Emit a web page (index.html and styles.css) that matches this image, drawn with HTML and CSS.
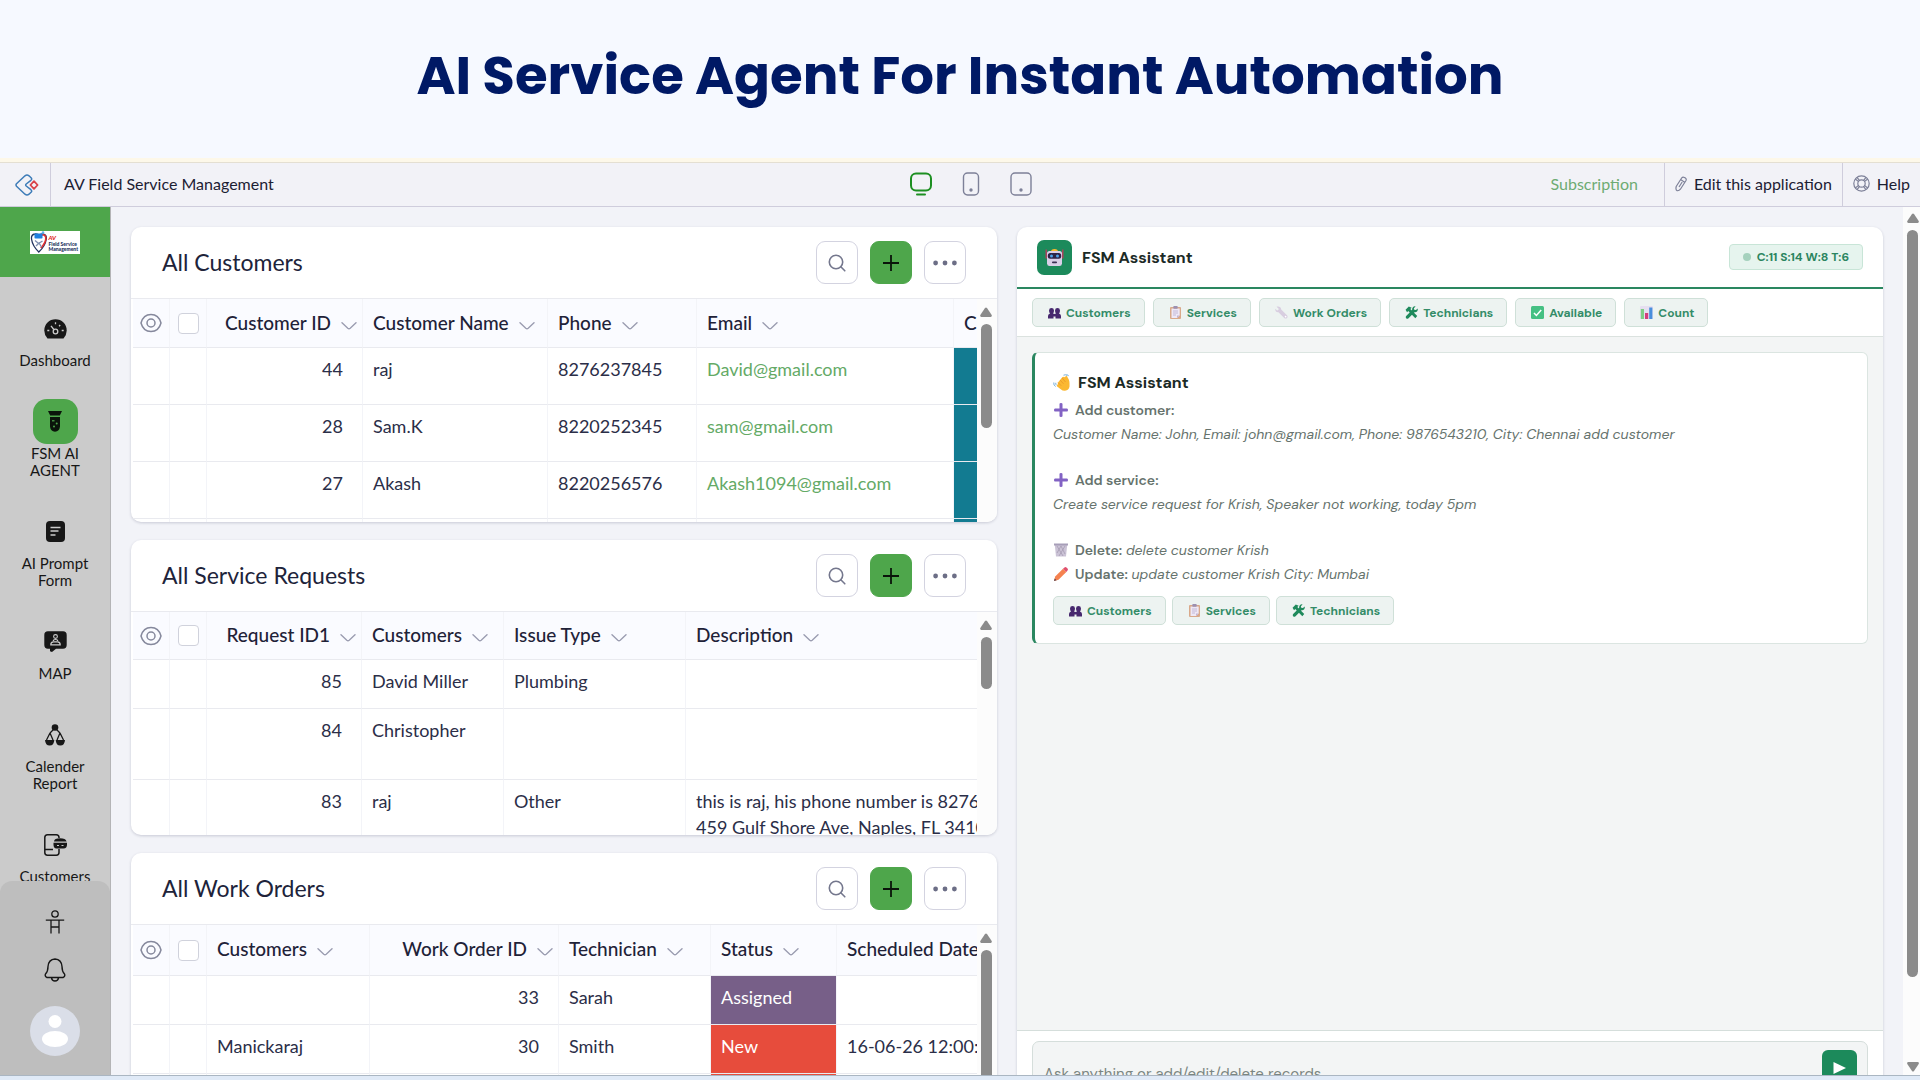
FILE: index.html
```html
<!doctype html>
<html lang="en">
    <head>
        <meta charset="UTF-8">
        <meta name="viewport" content="width=device-width, initial-scale=1.0">
        <title>AV Field Service Management</title>
        <link rel="stylesheet" href="styles.css">
    </head>
    <body>
        <svg class="sprite" aria-hidden="true">
            <symbol id="i-chevron" viewBox="0 0 16 8">
                <path d="M1 .8l5.8 5.4q1.2 1 2.4 0L15 .8" fill="none" stroke="#9a9cb0" stroke-width="1.4" stroke-linecap="round"/>
            </symbol>
            <symbol id="i-eye" viewBox="0 0 22 20">
                <path d="M1 10C2.500 4.500 6.500 1.500 11 1.500S19.500 4.500 21 10c-1.500 5.500-5.500 8.500-10 8.500S2.500 15.500 1 10z" fill="none" stroke="#85889c" stroke-width="1.500"/>
                <circle cx="11" cy="10" r="4" fill="none" stroke="#85889c" stroke-width="1.500"/>
            </symbol>
            <symbol id="i-search" viewBox="0 0 18 18">
                <circle cx="8" cy="8" r="6.700" fill="none" stroke="#74778d" stroke-width="1.600"/>
                <path d="M12.800 12.800l4 4" stroke="#74778d" stroke-width="1.600" stroke-linecap="round"/>
            </symbol>
            <symbol id="i-plus" viewBox="0 0 18 18">
                <path d="M9 1v16M1 9h16" stroke="#0a140a" stroke-width="1.800"/>
            </symbol>
            <symbol id="i-dots" viewBox="0 0 24 6">
                <circle cx="2.600" cy="3" r="2.400" fill="#6c6e86"/>
                <circle cx="12" cy="3" r="2.400" fill="#6c6e86"/>
                <circle cx="21.400" cy="3" r="2.400" fill="#6c6e86"/>
            </symbol>
            <symbol id="i-up" viewBox="0 0 12 10">
                <path d="M5 1q1-1 2 0l4.700 7q.6 1.800-1 2H1.300q-1.600-.2-1-2z" fill="#8b8b8b"/>
            </symbol>
            <symbol id="e-people" viewBox="0 0 13 12">
                <path d="M0 12V9.500q0-2 2-2.600Q1 5.900 1 4 1.100 1.600 3.500 1.600T6 4q0 1.900-1 2.900l1.500.6L8 6.900Q7 5.900 7 4q.1-2.400 2.500-2.400T12 4q0 1.900-1 2.900 2 .6 2 2.600V12H7.500v-2h-2v2z" fill="#47286e"/>
            </symbol>
            <symbol id="e-clip" viewBox="0 0 12 13">
                <rect x=".5" y="1" width="11" height="12" rx="1" fill="#d9a98a"/>
                <path d="M2 2.500h8.200v7L7.500 12H2z" fill="#eee8f6"/>
                <path d="M7.500 12V9.500h2.700z" fill="#c3b4d3"/>
                <rect x="3.800" y="0" width="4.400" height="2.700" rx=".8" fill="#9d90b0"/>
                <path d="M3.500 5h5M3.500 7h5M3.500 9h3" stroke="#b9add0" stroke-width=".8"/>
            </symbol>
            <symbol id="e-wrench" viewBox="0 0 12 12">
                <path d="M1.400.6l2 1.900-.3 1.200-1.200.4L.3 2.600C-.1 4.600 1.200 6 3.200 5.700l5.300 5.400q1.400 1.100 2.600-.1 1.100-1.200 0-2.500L5.700 3.300C5.900 1.400 3.900-.1 1.400.6z" fill="#d8cee0"/>
                <circle cx="9.800" cy="9.700" r=".8" fill="#fff"/>
            </symbol>
            <symbol id="e-tools" viewBox="0 0 12 12">
                <path d="M.5 3.500L3.500.5l2.700 1-1.300 1.300 6.400 6.500-1.800 1.900L3 4.700 1.900 5.800z" fill="#1f8a5c"/>
                <path d="M9.700.4L8.200 2l.3 1.500 1.600.3 1.600-1.500c.5 2-.8 3.700-2.900 3.400L3 11.500q-1 .7-1.900-.2-.8-1 0-2L6.600 3.800C6.300 1.700 7.800 0 9.700.4z" fill="#1f8a5c"/>
            </symbol>
            <symbol id="e-check" viewBox="0 0 13 13">
                <rect width="13" height="13" rx="1.500" fill="#45c083"/>
                <path d="M3 7l2.400 2.500L10.200 4" fill="none" stroke="#fff" stroke-width="1.500"/>
            </symbol>
            <symbol id="e-chart" viewBox="0 0 13 13">
                <rect width="13" height="13" rx="1" fill="#e6dff0"/>
                <rect x=".8" y="3" width="3.200" height="10" fill="#7ecf86"/>
                <rect x="5" y="7" width="3.200" height="6" fill="#d33f7c"/>
                <rect x="9.200" y="1.500" width="3.200" height="11.500" fill="#4a8fdc"/>
            </symbol>
            <symbol id="e-add" viewBox="0 0 14 14">
                <path d="M5.500 1q0-1 1.500-1t1.500 1v4.500H13q1 0 1 1.500t-1 1.500H8.500V13q0 1-1.500 1t-1.500-1V8.500H1Q0 8.500 0 7t1-1.500h4.500z" fill="#8262c4"/>
            </symbol>
            <symbol id="e-wave" viewBox="0 0 17 17">
                <path d="M5.200 8.200L9.500 3q1-.8 1.700.2L13.300 2q1 0 1.200 1.200l1.300 2.300q.7 1.500.7 3.500v3.500q-.6 4-4.500 4.200-2.500.1-4.300-1.500L4.200 12.500q-1-1.200.3-1.800z" fill="#fbb831"/>
                <path d="M5 8.500l3.200 3.200M7 6l3.500 3.800M9.200 4l3.300 4" stroke="#e8962a" stroke-width=".8"/>
                <path d="M10.500 1.200q2-1 3.500.2M13.500.3q1.500.5 2 1.800M.8 8.500q-.6 2.800 1.900 4M2.800 8.800q-.4 1.400.6 2.400" fill="none" stroke="#6aa7d6" stroke-width=".9"/>
            </symbol>
            <symbol id="e-bin" viewBox="0 0 14 14">
                <path d="M.8 2h12.400L12 13.500H2z" fill="#cbc3d6"/>
                <path d="M0 .5h14v2H0z" fill="#a79eb8"/>
                <path d="M3 3l6 10M7 3l4 8M11 3L5 13M7 3l-4 7" stroke="#a096ae" stroke-width=".7"/>
            </symbol>
            <symbol id="e-pencil" viewBox="0 0 14 14">
                <path d="M0 14l1.200-4.500L9 1.700l3.300 3.300-7.800 7.800z" fill="#f5824f"/>
                <path d="M9 1.700L10.500.4q1-.8 2 .2l1 1q.9 1 0 2L12.300 5z" fill="#e0506f"/>
                <path d="M0 14l.7-2.600 1.900 1.900z" fill="#5a4450"/>
            </symbol>
        </svg>

        <header class="hero">
            <h1>AI Service Agent For Instant Automation</h1>
        </header>

        <div class="app">
            <div class="topbar">
                <a class="topbar-logo" href="#" aria-label="Home">
                    <svg width="24" height="22" viewBox="0 0 24 22" fill="none" stroke-width="1.5" stroke-linejoin="round">
                        <path d="M1.500 9.800L10 1.800q2-1.600 4 0l2.300 2.200q.9 1.200-.4 2.300L11.200 10q-1 1 0 2l4.700 3.700q1.300 1.100.4 2.300L14 20.200q-2 1.600-4 0L1.500 12.200q-1-1.200 0-2.400z" stroke="#3d7cb8"/>
                        <path d="M19 7.200l3.600 3.800-3.600 3.800-3.600-3.800z" stroke="#d8434a" stroke-width="1.800"/>
                    </svg>
                </a>
                <div class="topbar-title">AV Field Service Management</div>
                <div class="devices">
                    <button type="button" aria-label="Desktop">
                        <svg width="22" height="24" viewBox="0 0 22 24" fill="none" stroke="#1d8f22" stroke-width="2" stroke-linecap="round">
                            <rect x="1" y="1.500" width="20" height="17" rx="5"/>
                            <path d="M7 22.500h8"/>
                        </svg>
                    </button>
                    <button type="button" aria-label="Phone">
                        <svg width="18" height="24" viewBox="0 0 18 24" fill="none" stroke="#7d8098" stroke-width="1.400">
                            <rect x="1.500" y="1" width="15" height="22" rx="4"/>
                            <circle cx="9" cy="18" r="1" fill="#6c6f8a"/>
                        </svg>
                    </button>
                    <button type="button" aria-label="Tablet">
                        <svg width="22" height="24" viewBox="0 0 22 24" fill="none" stroke="#7d8098" stroke-width="1.400">
                            <rect x="1" y="1" width="20" height="22" rx="4"/>
                            <circle cx="11" cy="18" r="1" fill="#6c6f8a"/>
                        </svg>
                    </button>
                </div>
                <div class="topbar-links">
                    <a class="subscription" href="#">Subscription</a>
                    <a class="topbar-link" href="#">
                        <svg width="12" height="16" viewBox="0 0 12 16" fill="none" stroke="#7d8098" stroke-width="1.200">
                            <path d="M1.200 10.500L6.800 1.800q1-1.300 2.600-.4l1 .7q1.300 1 .6 2.400L5.400 13.200q-1.400 1.800-3.300 1.500-1.700-.7-.9-4.200zM6 3.800l3.600 2.400M4 11L7.200 6"/>
                        </svg>
                        Edit this application
                    </a>
                    <a class="topbar-link" href="#">
                        <svg width="17" height="17" viewBox="0 0 17 17" fill="none" stroke="#7d8098" stroke-width="1.200">
                            <circle cx="8.500" cy="8.500" r="7.700"/>
                            <circle cx="8.500" cy="8.500" r="3.700"/>
                            <path d="M2.300 4l3.300 2.600M4 2.300l2.600 3.300M14.700 4l-3.300 2.600M13 2.300l-2.600 3.300M2.300 13l3.300-2.600M4 14.700l2.600-3.300M14.700 13l-3.300-2.600M13 14.700l-2.600-3.300"/>
                        </svg>
                        Help
                    </a>
                </div>
            </div>

            <div class="workspace">
                <nav class="sidebar">
                    <div class="brand">
                        <svg width="50" height="23" viewBox="0 0 50 23">
                            <rect width="50" height="23" fill="#fff"/>
                            <path d="M1.500 8Q1 3.500 5 3q3-.5 4 2 1.500-2.500 4.500-2 3.500 1 2.800 5-1 7-7.500 13Q2.500 15 1.500 8z" fill="#fff" stroke="#22325e" stroke-width="1.300"/>
                            <path d="M10 4.500q5-2 5.800 2 .4 5-5 10.500" fill="none" stroke="#e03131" stroke-width="1.600"/>
                            <rect x="4.500" y="2.500" width="8" height="5" rx=".8" fill="#1f7fe0"/>
                            <circle cx="13" cy="1.500" r="1.300" fill="#5bb5ee"/>
                            <path d="M5 9.500l3.500 3 4-2.500M6 15l3-3 2.500 4" fill="none" stroke="#7f8fb0" stroke-width="1.400"/>
                            <text x="18.500" y="9" class="brand-av">AV</text>
                            <text x="18.500" y="14.500" class="brand-name">Field Service</text>
                            <text x="18.500" y="19.500" class="brand-name">Management</text>
                        </svg>
                    </div>
                    <div class="menu">
                        <a class="menu-item" href="#">
                            <span class="menu-icon">
                                <svg width="23" height="20" viewBox="0 0 23 20">
                                    <path d="M3.500 19.500Q.3 16 .3 11.500C.3 5 5.300.3 11.500.3S22.700 5 22.700 11.500q0 4.500-3.200 8z" fill="#171717"/>
                                    <circle cx="11.500" cy="12.500" r="2.300" fill="none" stroke="#cbcbcb" stroke-width="1.300"/>
                                    <path d="M9.800 10.500L7 6.800M11.500 3.200v2M16.200 6l-1.100 1.200M3.300 11.500h2M17.700 11.500h2" stroke="#cbcbcb" stroke-width="1.300"/>
                                </svg>
                            </span>
                            Dashboard
                        </a>
                        <a class="menu-item active" href="#">
                            <span class="menu-icon">
                                <svg width="14" height="21" viewBox="0 0 14 21">
                                    <path d="M0 0h14l-2.200 4.600H2.200zM2 6h10v9.500q-.6 5-5 5.300-4.400-.3-5-5.300z" fill="#0a140a"/>
                                    <path d="M4 9.800h2.500" stroke="#4ea64b" stroke-width="1.200"/>
                                    <circle cx="8.700" cy="12.500" r="1" fill="#4ea64b"/>
                                    <circle cx="6" cy="15.500" r="1" fill="#4ea64b"/>
                                </svg>
                            </span>
                            FSM AI<br>AGENT
                        </a>
                        <a class="menu-item" href="#">
                            <span class="menu-icon">
                                <svg width="19" height="21" viewBox="0 0 19 21">
                                    <rect width="19" height="21" rx="4" fill="#171717"/>
                                    <path d="M4.500 6.500h10M4.500 10h8M4.500 14h5" stroke="#cbcbcb" stroke-width="1.500"/>
                                </svg>
                            </span>
                            AI Prompt<br>Form
                        </a>
                        <a class="menu-item" href="#">
                            <span class="menu-icon">
                                <svg width="23" height="21" viewBox="0 0 23 21">
                                    <path d="M4 .3h15q3.700 0 3.700 3.700v10q0 3.700-3.700 3.700h-7L8 21l-2-.8v-2.500H4Q.3 17.700.3 14V4Q.3.3 4 .3z" fill="#171717"/>
                                    <circle cx="11.500" cy="5.500" r="1.900" fill="none" stroke="#cbcbcb" stroke-width="1.100"/>
                                    <path d="M9.300 10q0-1.500 2.200-1.500t2.200 1.500M6.800 13.800q0-2.800 2.500-3h4.400q2.500.2 2.500 3z" fill="none" stroke="#cbcbcb" stroke-width="1.200"/>
                                </svg>
                            </span>
                            MAP
                        </a>
                        <a class="menu-item" href="#">
                            <span class="menu-icon">
                                <svg width="20" height="22" viewBox="0 0 20 22">
                                    <circle cx="10" cy="3.500" r="3.300" fill="#171717"/>
                                    <path d="M8.500 5.500L5 9M11.500 5.500L15 9M5 9L1.500 16M5 9l3 7M15 9l-3 7M15 9l3.500 7" fill="none" stroke="#171717" stroke-width="1.300"/>
                                    <path d="M0 16h9.300q-.3 5.500-4.600 5.500T0 16zM10.700 16H20q-.4 5.500-4.700 5.500T10.700 16z" fill="#171717"/>
                                </svg>
                            </span>
                            Calender<br>Report
                        </a>
                        <a class="menu-item" href="#">
                            <span class="menu-icon">
                                <svg width="23" height="22" viewBox="0 0 23 22">
                                    <path d="M15 4V3.500Q15 .8 12.300.8H3.500Q.8.800.8 3.500v15q0 2.700 2.700 2.700h8.800q2.700 0 2.700-2.700V15M.8 15.500H9" fill="none" stroke="#171717" stroke-width="1.500"/>
                                    <path d="M10 7.500q.3-3.200 6-3.200t6.600 3.200zM9.500 8.800H23v2q0 3.700-3.500 3.700h-7q-3 0-3-3.700z" fill="#171717"/>
                                    <path d="M13 11.500h2M17.500 11.500h2" stroke="#cbcbcb" stroke-width="1.200"/>
                                </svg>
                            </span>
                            Customers
                        </a>
                    </div>
                    <div class="sidebar-foot">
                        <button type="button" aria-label="Accessibility">
                            <svg width="20" height="24" viewBox="0 0 20 24" fill="none" stroke="#171717" stroke-width="1.300">
                                <circle cx="10" cy="4" r="3.200"/>
                                <path d="M.8 10.200h18.400M6 10.200V23.500M14 10.200V23.500M6 17h8"/>
                            </svg>
                        </button>
                        <button type="button" aria-label="Notifications">
                            <svg width="22" height="24" viewBox="0 0 22 24" fill="none" stroke="#171717" stroke-width="1.400" stroke-linejoin="round">
                                <path d="M11 1Q4.500 1.500 4 8.500q0 5-2.500 7.500-1 2.500 1.500 3.500h16q2.500-1 1.500-3.500Q18 13.500 18 8.500 17.500 1.500 11 1zM7.500 19.800q.5 3.200 3.500 3.200t3.500-3.200"/>
                            </svg>
                        </button>
                        <button type="button" aria-label="Profile">
                            <svg width="50" height="50" viewBox="0 0 50 50">
                                <circle cx="25" cy="25" r="25" fill="#dadee8"/>
                                <circle cx="25" cy="15.500" r="6.500" fill="#fff"/>
                                <ellipse cx="25" cy="33" rx="13" ry="8" fill="#fff"/>
                            </svg>
                        </button>
                    </div>
                </nav>

                <main class="content">
                    <div class="reports">
                        <section class="card report">
                            <div class="report-head">
                                <h2>All Customers</h2>
                                <button class="tool" type="button" aria-label="Search"><svg width="18" height="18"><use href="#i-search"/></svg></button>
                                <button class="tool add" type="button" aria-label="Add"><svg width="18" height="18"><use href="#i-plus"/></svg></button>
                                <button class="tool" type="button" aria-label="More"><svg width="24" height="6"><use href="#i-dots"/></svg></button>
                            </div>
                            <div class="report-body">
                                <div class="table-wrap">
                                    <table class="customers">
                                        <colgroup>
                                            <col class="w-icon"><col class="w-icon"><col class="w-156"><col class="w-185"><col class="w-149"><col class="w-257"><col class="w-185">
                                        </colgroup>
                                        <thead>
                                            <tr>
                                                <th class="icon-cell"><svg width="22" height="20"><use href="#i-eye"/></svg></th>
                                                <th class="icon-cell"><input type="checkbox" aria-label="Select all customers"></th>
                                                <th class="num">Customer ID<svg class="chev"><use href="#i-chevron"/></svg></th>
                                                <th>Customer Name<svg class="chev"><use href="#i-chevron"/></svg></th>
                                                <th>Phone<svg class="chev"><use href="#i-chevron"/></svg></th>
                                                <th>Email<svg class="chev"><use href="#i-chevron"/></svg></th>
                                                <th>City</th>
                                            </tr>
                                        </thead>
                                        <tbody>
                                            <tr><td></td><td></td><td class="num">44</td><td>raj</td><td>8276237845</td><td><a href="#">David@gmail.com</a></td><td class="teal"></td></tr>
                                            <tr><td></td><td></td><td class="num">28</td><td>Sam.K</td><td>8220252345</td><td><a href="#">sam@gmail.com</a></td><td class="teal"></td></tr>
                                            <tr><td></td><td></td><td class="num">27</td><td>Akash</td><td>8220256576</td><td><a href="#">Akash1094@gmail.com</a></td><td class="teal"></td></tr>
                                            <tr><td></td><td></td><td></td><td></td><td></td><td></td><td class="teal"></td></tr>
                                        </tbody>
                                    </table>
                                </div>
                                <div class="scroll">
                                    <svg width="12" height="10"><use href="#i-up"/></svg>
                                    <div class="thumb thumb-md"></div>
                                </div>
                            </div>
                        </section>

                        <section class="card report">
                            <div class="report-head">
                                <h2>All Service Requests</h2>
                                <button class="tool" type="button" aria-label="Search"><svg width="18" height="18"><use href="#i-search"/></svg></button>
                                <button class="tool add" type="button" aria-label="Add"><svg width="18" height="18"><use href="#i-plus"/></svg></button>
                                <button class="tool" type="button" aria-label="More"><svg width="24" height="6"><use href="#i-dots"/></svg></button>
                            </div>
                            <div class="report-body">
                                <div class="table-wrap">
                                    <table class="requests">
                                        <colgroup>
                                            <col class="w-icon"><col class="w-icon"><col class="w-155"><col class="w-142"><col class="w-182"><col class="w-500">
                                        </colgroup>
                                        <thead>
                                            <tr>
                                                <th class="icon-cell"><svg width="22" height="20"><use href="#i-eye"/></svg></th>
                                                <th class="icon-cell"><input type="checkbox" aria-label="Select all requests"></th>
                                                <th class="num">Request ID1<svg class="chev"><use href="#i-chevron"/></svg></th>
                                                <th>Customers<svg class="chev"><use href="#i-chevron"/></svg></th>
                                                <th>Issue Type<svg class="chev"><use href="#i-chevron"/></svg></th>
                                                <th>Description<svg class="chev"><use href="#i-chevron"/></svg></th>
                                            </tr>
                                        </thead>
                                        <tbody>
                                            <tr><td></td><td></td><td class="num">85</td><td>David Miller</td><td>Plumbing</td><td></td></tr>
                                            <tr class="tall"><td></td><td></td><td class="num">84</td><td>Christopher</td><td></td><td></td></tr>
                                            <tr><td></td><td></td><td class="num">83</td><td>raj</td><td>Other</td><td>this is raj, his phone number is 8276237845<br>459 Gulf Shore Ave, Naples, FL 34102</td></tr>
                                        </tbody>
                                    </table>
                                </div>
                                <div class="scroll">
                                    <svg width="12" height="10"><use href="#i-up"/></svg>
                                    <div class="thumb thumb-sm"></div>
                                </div>
                            </div>
                        </section>

                        <section class="card report">
                            <div class="report-head">
                                <h2>All Work Orders</h2>
                                <button class="tool" type="button" aria-label="Search"><svg width="18" height="18"><use href="#i-search"/></svg></button>
                                <button class="tool add" type="button" aria-label="Add"><svg width="18" height="18"><use href="#i-plus"/></svg></button>
                                <button class="tool" type="button" aria-label="More"><svg width="24" height="6"><use href="#i-dots"/></svg></button>
                            </div>
                            <div class="report-body">
                                <div class="table-wrap">
                                    <table class="orders">
                                        <colgroup>
                                            <col class="w-icon"><col class="w-icon"><col class="w-163"><col class="w-189"><col class="w-152"><col class="w-126"><col class="w-185">
                                        </colgroup>
                                        <thead>
                                            <tr>
                                                <th class="icon-cell"><svg width="22" height="20"><use href="#i-eye"/></svg></th>
                                                <th class="icon-cell"><input type="checkbox" aria-label="Select all work orders"></th>
                                                <th>Customers<svg class="chev"><use href="#i-chevron"/></svg></th>
                                                <th class="num">Work Order ID<svg class="chev"><use href="#i-chevron"/></svg></th>
                                                <th>Technician<svg class="chev"><use href="#i-chevron"/></svg></th>
                                                <th>Status<svg class="chev"><use href="#i-chevron"/></svg></th>
                                                <th>Scheduled Date</th>
                                            </tr>
                                        </thead>
                                        <tbody>
                                            <tr><td></td><td></td><td></td><td class="num">33</td><td>Sarah</td><td class="assigned">Assigned</td><td></td></tr>
                                            <tr><td></td><td></td><td>Manickaraj</td><td class="num">30</td><td>Smith</td><td class="new">New</td><td>16-06-26 12:00:00</td></tr>
                                            <tr><td></td><td></td><td></td><td></td><td></td><td class="new"></td><td></td></tr>
                                        </tbody>
                                    </table>
                                </div>
                                <div class="scroll">
                                    <svg width="12" height="10"><use href="#i-up"/></svg>
                                    <div class="thumb thumb-lg"></div>
                                </div>
                            </div>
                        </section>
                    </div>

                    <section class="card chat">
                        <div class="chat-head">
                            <span class="bot">
                                <svg width="19" height="19" viewBox="0 0 19 19">
                                    <path d="M1.200 1.500v9M17.800 1.500v9" stroke="#c0395f" stroke-width="1.300"/>
                                    <path d="M6 3.500Q6 1 9.500 1T13 3.500z" fill="#f7b92f"/>
                                    <path d="M2 5.500Q2 3 4.500 3h10Q17 3 17 5.500v10q-.3 2.500-2.500 2.500h-10Q2.300 18 2 15.500z" fill="#d9cfe8"/>
                                    <rect x="2.800" y="5" width="13.400" height="5.800" rx="2.500" fill="#2c2446"/>
                                    <circle cx="6.500" cy="7.900" r="1.500" fill="#4ba3ec"/>
                                    <circle cx="12.500" cy="7.900" r="1.500" fill="#4ba3ec"/>
                                    <rect x="7" y="13.500" width="5" height="1.800" rx=".8" fill="#3b3055"/>
                                </svg>
                            </span>
                            <h3>FSM Assistant</h3>
                            <span class="counts"><i></i>C:11 S:14 W:8 T:6</span>
                        </div>
                        <div class="chips chat-nav">
                            <button class="chip" type="button"><svg><use href="#e-people"/></svg>Customers</button>
                            <button class="chip" type="button"><svg><use href="#e-clip"/></svg>Services</button>
                            <button class="chip" type="button"><svg><use href="#e-wrench"/></svg>Work Orders</button>
                            <button class="chip" type="button"><svg><use href="#e-tools"/></svg>Technicians</button>
                            <button class="chip" type="button"><svg><use href="#e-check"/></svg>Available</button>
                            <button class="chip" type="button"><svg><use href="#e-chart"/></svg>Count</button>
                        </div>
                        <div class="chat-body">
                            <div class="message">
                                <h4><svg width="17" height="17"><use href="#e-wave"/></svg>FSM Assistant</h4>
                                <p><svg><use href="#e-add"/></svg><b>Add customer:</b><br><em>Customer Name: John, Email: john@gmail.com, Phone: 9876543210, City: Chennai add customer</em></p>
                                <p><svg><use href="#e-add"/></svg><b>Add service:</b><br><em>Create service request for Krish, Speaker not working, today 5pm</em></p>
                                <p><svg><use href="#e-bin"/></svg><b>Delete:</b> <em>delete customer Krish</em><br><svg><use href="#e-pencil"/></svg><b>Update:</b> <em>update customer Krish City: Mumbai</em></p>
                                <div class="chips">
                                    <button class="chip" type="button"><svg><use href="#e-people"/></svg>Customers</button>
                                    <button class="chip" type="button"><svg><use href="#e-clip"/></svg>Services</button>
                                    <button class="chip" type="button"><svg><use href="#e-tools"/></svg>Technicians</button>
                                </div>
                            </div>
                        </div>
                        <form class="chat-form">
                            <div class="ask">
                                <input type="text" aria-label="Message" placeholder="Ask anything or add/edit/delete records...">
                                <button type="submit" aria-label="Send">
                                    <svg width="13" height="12" viewBox="0 0 13 12"><path d="M.5 0L13 6 .5 12z" fill="#fff"/></svg>
                                </button>
                            </div>
                        </form>
                    </section>
                </main>

                <div class="page-scroll">
                    <svg width="12" height="10"><use href="#i-up"/></svg>
                    <div class="thumb"></div>
                    <svg class="down" width="12" height="10"><use href="#i-up"/></svg>
                </div>
            </div>
        </div>
    </body>
</html>
```

FILE: styles.css
```css
* {
    box-sizing: border-box;
}

body {
    margin: 0;
    height: 100vh;
    display: flex;
    flex-direction: column;
    overflow: hidden;
    background: #e0eaf7;
    font-family: Lato, "Open Sans", sans-serif;
    font-size: 18px;
    color: #2b2e48;
}

h1, h2, h3, h4, p {
    margin: 0;
}

a {
    color: inherit;
    text-decoration: none;
}

button {
    padding: 0;
    border: 0;
    background: none;
    font: inherit;
    color: inherit;
    display: flex;
    align-items: center;
    justify-content: center;
    cursor: pointer;
}

svg {
    display: block;
    flex: none;
}

.sprite {
    width: 0;
    height: 0;
    position: absolute;
}

.hero {
    height: 162px;
    flex: none;
    display: flex;
    align-items: center;
    justify-content: center;
    padding-bottom: 6px;
    background: #f6f9ff;
    border-bottom: 4px solid #fdf8e9;
}

.hero h1 {
    font-family: Poppins, Inter, sans-serif;
    font-size: 53px;
    font-weight: 700;
    color: #001965;
}

.app {
    flex: 1;
    min-height: 0;
    margin-bottom: 4px;
    display: flex;
    flex-direction: column;
    border-top: 1px solid #e4dfd2;
    border-bottom: 1px solid #aab6c2;
    background: #f2f3f8;
}

/* top bar */

.topbar {
    height: 44px;
    flex: none;
    display: flex;
    align-items: stretch;
    background: #f2f2f7;
    border-bottom: 1px solid #cfcddc;
    font-size: 16px;
    color: #1c2033;
}

.topbar-logo {
    width: 51px;
    display: flex;
    align-items: center;
    justify-content: center;
    padding-left: 4px;
    border-right: 1px solid #cfcddc;
}

.topbar-title {
    flex: 1;
    display: flex;
    align-items: center;
    padding: 0 0 2px 13px;
}

.devices {
    display: flex;
    align-items: center;
    gap: 30px;
    padding: 0 14px 2px 0;
}

.topbar-links {
    flex: 1;
    display: flex;
    justify-content: flex-end;
    padding-left: 28px;
}

.topbar-links a {
    display: flex;
    align-items: center;
    gap: 7px;
    padding-bottom: 2px;
}

.topbar-links .subscription {
    color: #6dab72;
    padding-right: 26px;
}

.topbar-link {
    padding: 0 10px;
    border-left: 1px solid #cfcddc;
}

/* sidebar */

.workspace {
    flex: 1;
    min-height: 0;
    display: flex;
}

.sidebar {
    width: 111px;
    flex: none;
    display: flex;
    flex-direction: column;
    background: #cbcbcb;
    border-right: 1px solid #b4b4b6;
    color: #171717;
}

.brand {
    height: 70px;
    flex: none;
    display: flex;
    align-items: center;
    justify-content: center;
    background: #4ea64b;
}

.brand-av {
    font: italic 900 6px Lato, sans-serif;
    fill: #e02020;
}

.brand-name {
    font: 900 5px Lato, sans-serif;
    fill: #22325e;
}

.menu {
    flex: 1;
    min-height: 0;
    overflow: hidden;
    display: flex;
    flex-direction: column;
    gap: 30px;
    padding-top: 29px;
}

.menu-item {
    flex: none;
    display: block;
    text-align: center;
    font-size: 15px;
    line-height: 17px;
}

.menu-icon {
    width: 45px;
    height: 45px;
    margin: 0 auto 1px;
    display: flex;
    align-items: center;
    justify-content: center;
    border-radius: 14px;
}

.active .menu-icon {
    background: #4ea64b;
}

.sidebar-foot {
    flex: none;
    display: flex;
    flex-direction: column;
    align-items: center;
    gap: 24px;
    padding: 29px 0 19px;
    border-radius: 12px 12px 0 0;
    background: #bebebe;
}

/* reports */

.content {
    flex: 1;
    min-width: 0;
    display: grid;
    grid-template-columns: minmax(0, 1fr) minmax(0, 1fr);
    align-items: start;
    gap: 20px;
    padding: 20px 20px 0;
    overflow: hidden;
}

.reports {
    display: flex;
    flex-direction: column;
    gap: 18px;
}

.card {
    background: #fff;
    border-radius: 10px;
    overflow: hidden;
    box-shadow: 0 1px 3px rgba(40, 45, 80, .2);
}

.report-head {
    height: 72px;
    display: flex;
    align-items: center;
    gap: 12px;
    padding: 0 31px;
    border-bottom: 1px solid #e9eaef;
}

.report-head h2 {
    flex: 1;
    padding-bottom: 2px;
    font-size: 23px;
    font-weight: 400;
    color: #20233a;
}

.tool {
    width: 42px;
    height: 43px;
    border: 1px solid #d3d3e0;
    border-radius: 9px;
}

.tool.add {
    border-color: #4ea64b;
    background: #4ea64b;
}

.report-body {
    display: flex;
    height: 223px;
    padding-left: 2px;
}

.table-wrap {
    flex: 1;
    min-width: 0;
    overflow: hidden;
}

table {
    table-layout: fixed;
    width: 0;
    border-collapse: separate;
    border-spacing: 0;
}

.w-icon { width: 37px; }
.w-126 { width: 126px; }
.w-142 { width: 142px; }
.w-149 { width: 149px; }
.w-152 { width: 152px; }
.w-155 { width: 155px; }
.w-156 { width: 156px; }
.w-163 { width: 163px; }
.w-182 { width: 182px; }
.w-185 { width: 185px; }
.w-189 { width: 189px; }
.w-257 { width: 257px; }
.w-500 { width: 500px; }

th, td {
    border-right: 1px solid #f3f4f8;
    border-bottom: 1px solid #e9eaef;
    padding: 0 10px;
    text-align: left;
    white-space: nowrap;
}

th {
    height: 48px;
    padding-bottom: 2px;
    background: #fafbff;
    font-size: 19px;
    font-weight: 500;
    color: #1f2238;
}

td {
    height: 49px;
    padding-top: 8px;
    line-height: 26px;
    vertical-align: top;
}

.customers th {
    height: 49px;
}

.customers td {
    height: 57px;
}

.orders th {
    height: 51px;
    padding-bottom: 4px;
}

.requests .tall td {
    height: 71px;
}

th.num {
    padding-right: 5px;
    text-align: right;
}

td.num {
    padding-right: 19px;
    text-align: right;
}

td a {
    color: #64aa66;
}

th.icon-cell {
    padding: 0;
}

.icon-cell svg,
.icon-cell input {
    margin: 0 auto;
}

.icon-cell input {
    display: block;
    appearance: none;
    width: 21px;
    height: 21px;
    border: 1px solid #d0d2dc;
    border-radius: 4px;
    background: #fff;
}

.chev {
    display: inline-block;
    width: 16px;
    height: 8px;
    margin-left: 10px;
}

.teal {
    background: #127b91;
}

td.assigned {
    background: #775f88;
    color: #fff;
}

td.new {
    background: #e74c3c;
    color: #fff;
}

.scroll {
    width: 20px;
    flex: none;
    display: flex;
    flex-direction: column;
    align-items: center;
    padding: 8px 2px 0 0;
    background: #fcfcfc;
}

.thumb {
    width: 11px;
    margin-top: 7px;
    border-radius: 6px;
    background: #8b8b8b;
}

.thumb-md { height: 104px; }
.thumb-sm { height: 52px; }
.thumb-lg { height: 160px; }

/* assistant */

.chat {
    height: calc(100vh - 190px);
    display: flex;
    flex-direction: column;
    font-family: "DM Sans", Inter, sans-serif;
    font-size: 14px;
    color: #66736d;
}

.chat-head {
    height: 62px;
    flex: none;
    display: flex;
    align-items: center;
    gap: 10px;
    padding: 0 20px;
    border-bottom: 2px solid #2a8760;
}

.bot {
    width: 35px;
    height: 35px;
    display: flex;
    align-items: center;
    justify-content: center;
    border-radius: 7px;
    background: #1c8a5b;
}

.chat-head h3,
.message h4 {
    font-size: 16px;
    font-weight: 700;
    color: #1b2a26;
}

.counts {
    height: 26px;
    margin-left: auto;
    display: flex;
    align-items: center;
    gap: 6px;
    padding: 0 13px;
    border: 1px solid #c8e5d7;
    border-radius: 4px;
    background: #e6f4ee;
    font-size: 12px;
    font-weight: 700;
    color: #2b8560;
}

.counts i {
    width: 8px;
    height: 8px;
    border-radius: 50%;
    background: #a5d1bd;
}

.chips {
    display: flex;
    gap: 6px;
}

.chat-nav {
    flex: none;
    gap: 8px;
    padding: 9px 15px;
    border-bottom: 1px solid #dbe2df;
}

.chip {
    height: 29px;
    gap: 5px;
    padding: 0 13px 0 15px;
    border: 1px solid #cfe0d8;
    border-radius: 5px;
    background: #edf3f1;
    font-size: 12px;
    font-weight: 700;
    color: #348c68;
}

.chip svg {
    width: 13px;
    height: 13px;
}

.chat-body {
    flex: 1;
    padding: 15px;
    background: #f3f5f5;
}

.message {
    display: flex;
    flex-direction: column;
    padding: 18px;
    border: 1px solid #dbe5e1;
    border-left: 3px solid #2a8760;
    border-radius: 6px;
    background: #fff;
}

.message h4 {
    display: flex;
    align-items: center;
    gap: 8px;
    height: 27px;
    padding-bottom: 4px;
}

.message p {
    line-height: 24px;
    margin-bottom: 22px;
}

.message p:last-of-type {
    margin-bottom: 10px;
}

.message p svg {
    display: inline-block;
    width: 14px;
    height: 14px;
    margin: 0 7px 0 1px;
    vertical-align: -2px;
}

.message b {
    font-weight: 600;
}

.chat-form {
    flex: none;
    padding: 10px 15px;
    border-top: 1px solid #d5dedb;
}

.ask {
    display: flex;
    padding: 8px 10px 8px 11px;
    border: 1px solid #d5dedb;
    border-radius: 7px;
    background: #f3f5f5;
}

.ask input {
    flex: 1;
    height: 48px;
    padding: 0;
    border: 0;
    background: none;
    font: inherit;
    font-size: 15px;
    color: #66736d;
    outline: none;
}

.ask input::placeholder {
    color: #7b8682;
}

.ask button {
    width: 35px;
    height: 35px;
    border-radius: 6px;
    background: #1c8a5b;
}

.page-scroll {
    width: 17px;
    flex: none;
    display: flex;
    flex-direction: column;
    align-items: center;
    padding: 6px 0 3px 2px;
    background: #fcfcfc;
}

.page-scroll .thumb {
    height: 87%;
}

.down {
    margin-top: auto;
    transform: rotate(180deg);
}
```
